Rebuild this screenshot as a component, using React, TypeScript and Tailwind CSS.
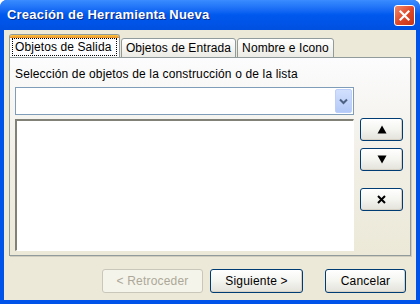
import React from 'react'

const font = { fontFamily: '"Liberation Sans", Arial, sans-serif' }

function XpButton({ label, disabled, className }: { label: React.ReactNode; disabled?: boolean; className: string }) {
  return (
    <button
      type="button"
      className={
        'flex items-center justify-center rounded-[3px] border text-[12px] ' +
        (disabled
          ? 'border-[#c9c7ba] bg-[#f5f4ea] text-[#aca899] '
          : 'border-[#003c74] bg-gradient-to-b from-[#ffffff] via-[#f4f4f0] to-[#e3e2da] text-black shadow-[inset_-1px_-1px_0_#d6d0c5] ') +
        className
      }
    >
      {label}
    </button>
  )
}

export default function App() {
  return (
    <div className="w-[420px] h-[304px] flex flex-col bg-[#0053e8] rounded-t-[7px] overflow-hidden" style={font}>
      <div className="h-[30px] shrink-0 flex items-center justify-between pl-[7px] pr-[5px] bg-gradient-to-b from-[#3a8cff] via-[#0058ee] to-[#0050e0]">
        <span className="text-white font-bold text-[13px] tracking-[0.2px] [text-shadow:1px_1px_0_#0a2a8a]">
          Creación de Herramienta Nueva
        </span>
        <div className="w-[21px] h-[21px] rounded-[3px] border border-white bg-gradient-to-br from-[#f0896a] via-[#e0492a] to-[#c53415] flex items-center justify-center">
          <svg width="11" height="11" viewBox="0 0 11 11">
            <path d="M1.5 1.5 L9.5 9.5 M9.5 1.5 L1.5 9.5" stroke="white" strokeWidth="2.2" strokeLinecap="square" />
          </svg>
        </div>
      </div>

      <div className="flex-1 mx-[4px] mb-[4px] bg-[#ece9d8] flex flex-col px-[5px] pt-[5px]">
        {/* tabs */}
        <div className="flex items-end h-[22px] relative z-10">
          <div className="h-[23px] w-[111px] border border-b-0 border-[#919b9c] rounded-t-[3px] bg-[#fcfcfe] relative overflow-hidden">
            <div className="h-[3px] bg-gradient-to-b from-[#ffc83c] to-[#e68b2c]" />
            <div className="mx-[2px] h-[18px] border border-dotted border-black flex items-center px-[2px] text-[12px] tracking-[0.1px] text-black">
              Objetos de Salida
            </div>
          </div>
          <div className="h-[20px] w-[115px] ml-[1px] mb-[-1px] border border-[#919b9c] rounded-t-[3px] bg-gradient-to-b from-[#ffffff] to-[#ecebe5] flex items-center justify-center text-[12px] tracking-[0.1px] text-black">
            Objetos de Entrada
          </div>
          <div className="h-[20px] w-[97px] ml-[1px] mb-[-1px] border border-[#919b9c] rounded-t-[3px] bg-gradient-to-b from-[#ffffff] to-[#ecebe5] flex items-center justify-center text-[12px] tracking-[0.1px] text-black">
            Nombre e Icono
          </div>
        </div>

        {/* panel */}
        <div className="w-[402px] h-[199px] border border-[#919b9c] bg-gradient-to-b from-[#fcfcfe] via-[#f1efe6] to-[#ece9d8] pl-[5px] pt-[9px] shadow-[1px_1px_0_#d0cdbf]">
          <div className="text-[12px] text-black leading-[14px] tracking-[0.15px]">Selección de objetos de la construcción o de la lista</div>
          <div className="flex gap-[6px] mt-[6px]">
            <div className="w-[339px] flex flex-col gap-[4px]">
              <div className="h-[28px] border border-[#7f9db9] bg-white flex justify-end items-stretch p-[1px]">
                <div className="w-[17px] rounded-[2px] bg-gradient-to-b from-[#d2e0fd] to-[#b3c9f7] border border-[#bccffa] flex items-center justify-center">
                  <svg width="9" height="7" viewBox="0 0 9 7">
                    <path d="M1 1.5 L4.5 5 L8 1.5" fill="none" stroke="#4d6185" strokeWidth="2" />
                  </svg>
                </div>
              </div>
              <div className="h-[132px] bg-white border-t-2 border-l-2 border-[#828177] border-r border-b border-r-white border-b-white" />
            </div>
            <div className="flex flex-col mt-[31px]">
              <XpButton
                label={
                  <svg width="10" height="9" viewBox="0 0 10 9">
                    <path d="M5 0.5 L9.5 8.5 L0.5 8.5 Z" fill="black" />
                  </svg>
                }
                className="w-[43px] h-[23px]"
              />
              <XpButton
                label={
                  <svg width="10" height="9" viewBox="0 0 10 9">
                    <path d="M0.5 0.5 L9.5 0.5 L5 8.5 Z" fill="black" />
                  </svg>
                }
                className="w-[43px] h-[23px] mt-[7px]"
              />
              <XpButton
                label={
                  <svg width="9" height="9" viewBox="0 0 9 9">
                    <path d="M1 1 L8 8 M8 1 L1 8" stroke="black" strokeWidth="2" />
                  </svg>
                }
                className="w-[43px] h-[23px] mt-[17px]"
              />
            </div>
          </div>
        </div>

        {/* footer */}
        <div className="flex mt-[13px] pl-[93px]">
          <XpButton label="< Retroceder" disabled className="w-[101px] h-[24px] tracking-[0.2px]" />
          <XpButton label="Siguiente >" className="w-[93px] h-[24px] ml-[7px] tracking-[0.2px]" />
          <XpButton label="Cancelar" className="w-[81px] h-[24px] ml-[22px] tracking-[0.2px]" />
        </div>
      </div>
    </div>
  )
}
